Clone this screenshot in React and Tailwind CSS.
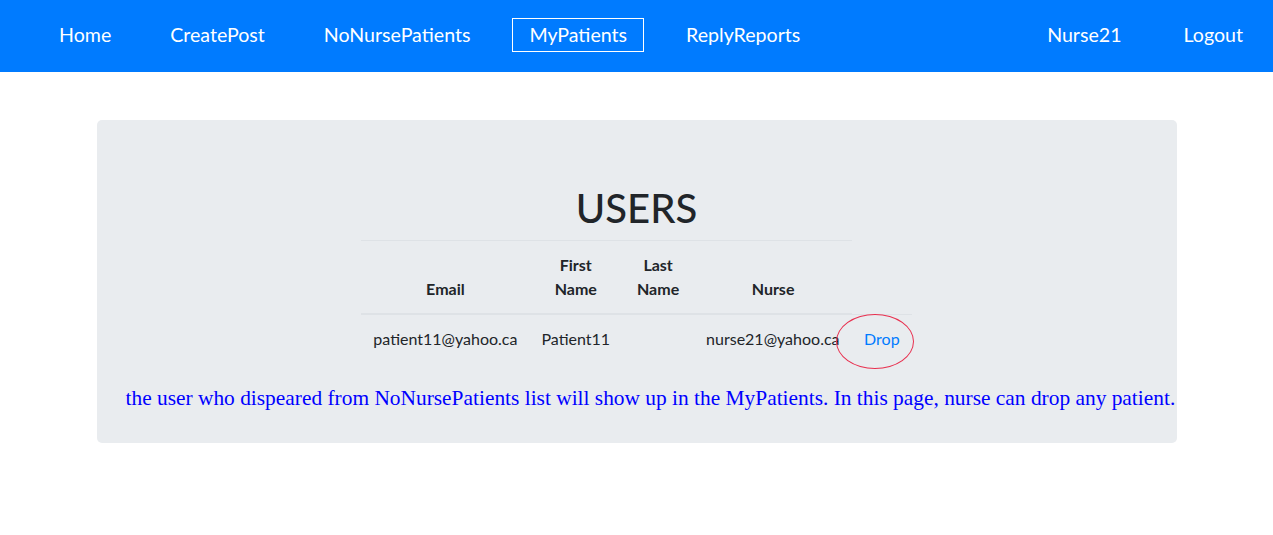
export default function App() {
  const navLeft = ["Home", "CreatePost", "NoNursePatients", "MyPatients", "ReplyReports"];
  return (
    <div className="min-h-[535px] bg-white" style={{ fontFamily: "Lato, 'Open Sans', sans-serif" }}>
      <nav className="h-[72px] bg-[#007bff] flex items-center pb-[3px] pl-[42px] pr-[14px] text-white text-[19.6px]">
        <div className="flex items-center gap-[25px]">
          {navLeft.map((n) => (
            <a
              key={n}
              className={
                "px-4 h-[34px] flex items-center leading-none " +
                (n === "MyPatients" ? "border border-white" : "border border-transparent")
              }
            >
              {n}
            </a>
          ))}
        </div>
        <div className="ml-auto flex items-center gap-[30px]">
          <a className="px-4 h-[34px] flex items-center">Nurse21</a>
          <a className="px-4 h-[34px] flex items-center">Logout</a>
        </div>
      </nav>
      <div className="w-[1080px] mx-auto mt-[48px] bg-[#e9ecef] rounded-[5px] pt-[64px] pb-[29px] text-[#212529]">
        <h1 className="text-[40px] font-medium leading-[48px] text-center mb-2">USERS</h1>
        <div className="relative w-fit mx-auto">
          <table className="border-collapse text-[16px] leading-6 mb-4">
            <thead>
              <tr>
                <th className="w-[166px] p-3 align-bottom border-t border-[#dee2e6] border-b-2 font-bold">Email</th>
                <th className="w-[88px] p-3 align-bottom border-t border-[#dee2e6] border-b-2 font-bold">First<br />Name</th>
                <th className="w-[72px] p-3 align-bottom border-t border-[#dee2e6] border-b-2 font-bold">Last<br />Name</th>
                <th className="w-[158px] p-3 align-bottom border-t border-[#dee2e6] border-b-2 font-bold">Nurse</th>
              </tr>
            </thead>
            <tbody>
              <tr>
                <td className="p-3 border-t border-[#dee2e6] whitespace-nowrap">patient11@yahoo.ca</td>
                <td className="p-3 border-t border-[#dee2e6] whitespace-nowrap">Patient11</td>
                <td className="p-3 border-t border-[#dee2e6]"></td>
                <td className="p-3 border-t border-[#dee2e6] whitespace-nowrap">nurse21@yahoo.ca</td>
                <td className="w-[59px] p-3 border-t border-[#dee2e6]">
                  <a className="text-[#007bff]">Drop</a>
                </td>
              </tr>
            </tbody>
          </table>
          <div className="absolute left-[475px] top-[74px] w-[78px] h-[55px] rounded-[50%] border border-[#e8304f] pointer-events-none" />
        </div>
        <p
          className="pl-[29px] mt-[19px] whitespace-nowrap text-[21.4px] leading-[32px] text-[#0000ff]"
          style={{ fontFamily: "'Liberation Serif', 'Times New Roman', serif" }}
        >
          the user who dispeared from NoNursePatients list will show up in the MyPatients. In this page, nurse can drop any patient.
        </p>
      </div>
    </div>
  );
}
